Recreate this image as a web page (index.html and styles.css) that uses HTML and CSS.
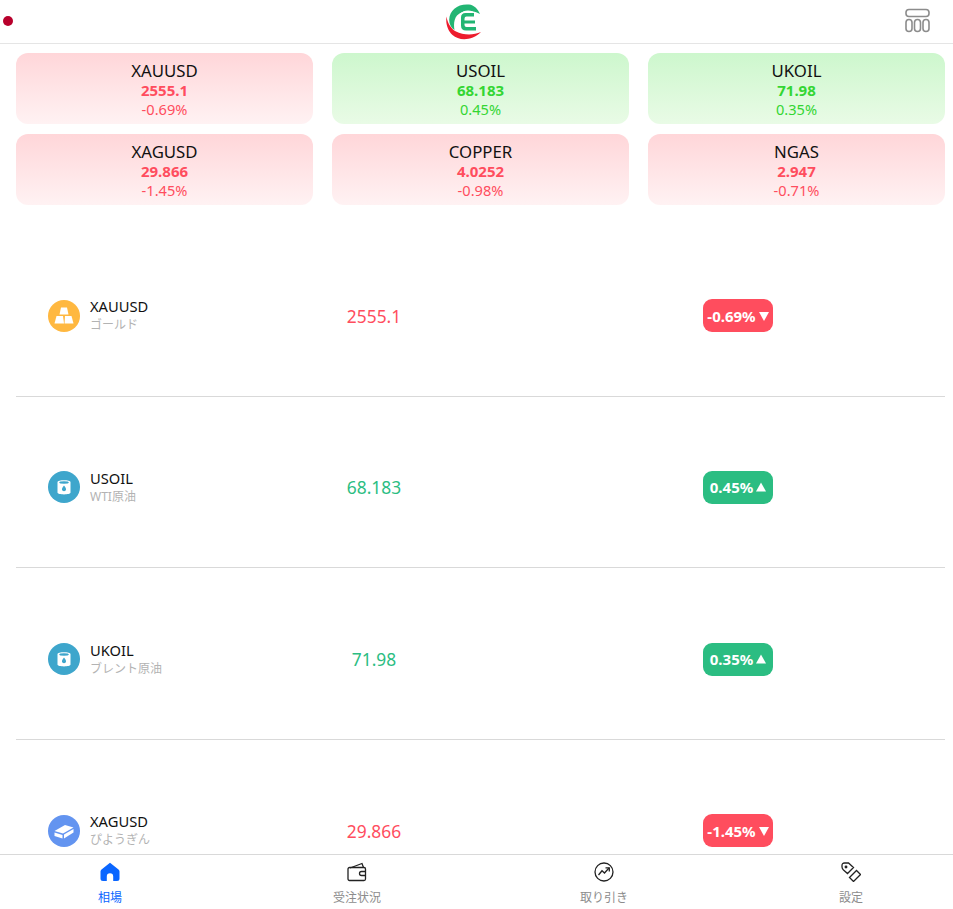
FILE: index.html
```html
<!DOCTYPE html>
<html lang="ja">
<head>
<meta charset="utf-8">
<title>相場</title>
<link rel="stylesheet" href="styles.css">
</head>
<body>
<header class="topbar">
  <span class="dot"></span>
  <svg class="logo" viewBox="0 0 36 36" width="36" height="36">
    <path d="M23 .5C12 -.5 3.500 6 3.200 15.500C3 20 5 24 8.500 26C7.500 21 8 15 11 11.500C14.500 7.500 20 6.500 27 7.500C29 7.800 31 8.500 34 10C32 5 28 1 23 .5Z" fill="#22b573"/>
    <path d="M.5 12.500C-.5 19 1.300 26 6.500 31C13 37 26 37 35 28C27 31.500 17 31 10 27.500C5 25 1.500 19 .5 12.500Z" fill="#ed1c2e"/>
    <circle cx="22" cy="18" r="11.500" fill="#fff"/>
    <path d="M28 9H19.500Q15 9 15 13.500V21.500Q15 26.500 20 26.500H30V23H20.500Q18.500 23 18.500 21V19.500H29V16.500H18.500V14.800Q18.500 12.500 20.500 12.500H28Z" fill="#22b573"/>
  </svg>
  <svg class="menu-icon" viewBox="0 0 25 25" width="25" height="25" fill="none" stroke="#8c8c8c" stroke-width="1.600">
    <rect x="1" y="1.500" width="23" height="7" rx="3"/>
    <rect x="1" y="11.500" width="6" height="12" rx="3"/>
    <rect x="9.500" y="11.500" width="6" height="12" rx="3"/>
    <rect x="18" y="11.500" width="6" height="12" rx="3"/>
  </svg>
</header>

<main class="content">
  <section class="cards">
    <div class="card down"><div class="card-name">XAUUSD</div><div class="card-price">2555.1</div><div class="card-pct">-0.69%</div></div>
    <div class="card up"><div class="card-name">USOIL</div><div class="card-price">68.183</div><div class="card-pct">0.45%</div></div>
    <div class="card up"><div class="card-name">UKOIL</div><div class="card-price">71.98</div><div class="card-pct">0.35%</div></div>
    <div class="card down"><div class="card-name">XAGUSD</div><div class="card-price">29.866</div><div class="card-pct">-1.45%</div></div>
    <div class="card down"><div class="card-name">COPPER</div><div class="card-price">4.0252</div><div class="card-pct">-0.98%</div></div>
    <div class="card down"><div class="card-name">NGAS</div><div class="card-price">2.947</div><div class="card-pct">-0.71%</div></div>
  </section>

  <section class="list">
    <div class="row">
      <div class="symbol">
        <span class="avatar gold">
          <svg viewBox="0 0 22 22" width="22" height="22" fill="#fff"><path d="M8 2.500H14L15.500 9.500H6.500Z"/><path d="M3.500 11H10L11 18.500H1.500Z"/><path d="M12 11H18.500L20.500 18.500H11.500Z"/></svg>
        </span>
        <div class="names"><div class="code">XAUUSD</div><div class="jp">ゴールド</div></div>
      </div>
      <div class="price fall">2555.1</div>
      <div class="badge-cell"><span class="badge bg-fall">-0.69%<svg class="tri" viewBox="0 0 10 10" width="10" height="10"><path d="M0 1H10L5 10Z" fill="#fff"/></svg></span></div>
    </div>
    <div class="row">
      <div class="symbol">
        <span class="avatar oil">
          <svg viewBox="0 0 20 20" width="20" height="20"><path d="M3.500 5C3.500 2.500 16.500 2.500 16.500 5V15.500C16.500 18 3.500 18 3.500 15.500Z" fill="#fff"/><ellipse cx="10" cy="5.500" rx="4.800" ry="1.200" fill="#3ea6cc"/><path d="M10 8.500C11.500 10.500 12 11.300 12 12.200A2 2 0 0 1 8 12.200C8 11.300 8.500 10.500 10 8.500Z" fill="#3ea6cc"/></svg>
        </span>
        <div class="names"><div class="code">USOIL</div><div class="jp">WTI原油</div></div>
      </div>
      <div class="price rise">68.183</div>
      <div class="badge-cell"><span class="badge bg-rise">0.45%<svg class="tri" viewBox="0 0 10 10" width="10" height="10"><path d="M0 9.500H10L5 .5Z" fill="#fff"/></svg></span></div>
    </div>
    <div class="row">
      <div class="symbol">
        <span class="avatar oil">
          <svg viewBox="0 0 20 20" width="20" height="20"><path d="M3.500 5C3.500 2.500 16.500 2.500 16.500 5V15.500C16.500 18 3.500 18 3.500 15.500Z" fill="#fff"/><ellipse cx="10" cy="5.500" rx="4.800" ry="1.200" fill="#3ea6cc"/><path d="M10 8.500C11.500 10.500 12 11.300 12 12.200A2 2 0 0 1 8 12.200C8 11.300 8.500 10.500 10 8.500Z" fill="#3ea6cc"/></svg>
        </span>
        <div class="names"><div class="code">UKOIL</div><div class="jp">ブレント原油</div></div>
      </div>
      <div class="price rise">71.98</div>
      <div class="badge-cell"><span class="badge bg-rise">0.35%<svg class="tri" viewBox="0 0 10 10" width="10" height="10"><path d="M0 9.500H10L5 .5Z" fill="#fff"/></svg></span></div>
    </div>
    <div class="row">
      <div class="symbol">
        <span class="avatar silver">
          <svg viewBox="0 0 22 22" width="22" height="22" fill="#fff"><path d="M1.500 11L12 5L20.500 7.500L10 13.500Z"/><path d="M1.500 12.500L9.500 15V18.500L1.500 16Z"/><path d="M11 14.500L20.500 9V12.500L11 18.500Z"/></svg>
        </span>
        <div class="names"><div class="code">XAGUSD</div><div class="jp">ぴようぎん</div></div>
      </div>
      <div class="price fall">29.866</div>
      <div class="badge-cell"><span class="badge bg-fall">-1.45%<svg class="tri" viewBox="0 0 10 10" width="10" height="10"><path d="M0 1H10L5 10Z" fill="#fff"/></svg></span></div>
    </div>
  </section>
</main>

<nav class="tabbar">
  <div class="tab active">
    <svg viewBox="0 0 20 20" width="20" height="20"><path d="M10 .8L1.500 7.500Q.5 8.300 .5 9.500V16.500Q.5 19 3 19H6.800V14.500A3.200 3.200 0 0 1 13.200 14.500V19H17Q19.500 19 19.500 16.500V9.500Q19.500 8.300 18.500 7.500Z" fill="#0a66ff"/></svg>
    <span>相場</span>
  </div>
  <div class="tab">
    <svg viewBox="0 0 20 20" width="20" height="20" fill="none" stroke="#222" stroke-width="1.300"><path d="M3 6L15 1.500L16.500 5.500"/><rect x="1" y="5.500" width="17.500" height="13" rx="1.500"/><path d="M18.500 9.500H14.500A2 2 0 0 0 14.500 13.500H18.500"/></svg>
    <span>受注状況</span>
  </div>
  <div class="tab">
    <svg viewBox="0 0 20 20" width="20" height="20" fill="none" stroke="#222" stroke-width="1.300"><circle cx="10" cy="10" r="9"/><path d="M4.500 13L8 8.800L10.500 11L15 6"/><path d="M11.500 5.800H15.300V9.500"/></svg>
    <span>取り引き</span>
  </div>
  <div class="tab">
    <svg viewBox="0 0 20 20" width="20" height="20" fill="none" stroke="#222" stroke-width="1.300"><path d="M1 3.500Q1 1 3.500 1H7.500L12.500 5.500L6.500 11.500L2.500 8Q1 6.500 1 5Z"/><circle cx="5" cy="5" r=".8" fill="#222"/><path d="M8.500 15.500L15.500 8.500L19.500 12.500L12.500 19.500Z"/></svg>
    <span>設定</span>
  </div>
</nav>
</body>
</html>
```

FILE: styles.css
```css
* { box-sizing: border-box; }
html, body { margin: 0; height: 100%; }
body {
  display: flex;
  flex-direction: column;
  height: 909px;
  overflow: hidden;
  background: #fff;
  color: #111;
  font-family: "Noto Sans", "Noto Sans CJK JP", sans-serif;
}

.topbar {
  position: relative;
  flex: none;
  height: 44px;
  display: flex;
  align-items: center;
  justify-content: space-between;
  padding: 0 23px 2px 3px;
  border-bottom: 1px solid #e5e5e5;
}
.dot { width: 10px; height: 10px; border-radius: 50%; background: #b8002c; }
.logo { position: absolute; left: 446px; top: 4px; }
.menu-icon { display: block; margin-top: -1px; }

.content { flex: 1; min-height: 0; overflow: hidden; padding: 9px 8px 0 16px; }

.cards {
  display: grid;
  grid-template-columns: repeat(3, 297px);
  justify-content: space-between;
  row-gap: 10px;
}
.card {
  height: 71px;
  border-radius: 12px;
  text-align: center;
  padding-top: 8px;
}
.card.down { background: linear-gradient(#ffd6d9, #fff2f3); }
.card.up { background: linear-gradient(#cdf7cd, #e9fbe6); }
.card-name { font-size: 16.800px; line-height: 20px; }
.card-price { font-size: 15px; line-height: 19px; font-weight: 700; }
.card-pct { font-size: 14.600px; line-height: 19px; }
.down .card-price, .down .card-pct { color: #ff4d5e; }
.up .card-price, .up .card-pct { color: #33d633; }

.list { margin-top: 20px; }
.row {
  height: 171.67px;
  padding: 11px 0 0 32px;
  display: grid;
  grid-template-columns: 228px 196px 1fr;
  align-items: center;
  border-bottom: 1px solid #d9d9d9;
}
.symbol { display: flex; align-items: center; gap: 10px; }
.avatar {
  flex: none;
  width: 32px;
  height: 32px;
  border-radius: 50%;
  display: flex;
  align-items: center;
  justify-content: center;
}
.avatar.gold { background: #ffb840; }
.avatar.oil { background: #3ea6cc; }
.avatar.silver { background: #6394f0; }
.names { padding-top: 1px; }
.code { font-size: 14.700px; line-height: 18px; }
.jp { font-size: 12px; line-height: 20px; color: #b3b3b3; }
.price { font-size: 17.400px; text-align: center; }
.price.fall { color: #ff4d5e; }
.price.rise { color: #2bbd82; }
.badge-cell { padding-left: 231px; }
.badge {
  display: inline-flex;
  align-items: center;
  justify-content: center;
  gap: 3px;
  width: 70px;
  height: 33px;
  border-radius: 9px;
  color: #fff;
  font-size: 15px;
  font-weight: 700;
}
.bg-fall { background: #ff4d5e; }
.bg-rise { background: #2bbd82; }

.tabbar {
  flex: none;
  height: 55px;
  display: flex;
  justify-content: space-between;
  padding: 7px 42px 0 50px;
  background: #fff;
  border-top: 1px solid #d9d9d9;
}
.tab {
  width: 120px;
  display: flex;
  flex-direction: column;
  align-items: center;
  gap: 8px;
  font-size: 12px;
  line-height: 16px;
  color: #8c8c8c;
}
.tab.active { color: #0a66ff; }
```
